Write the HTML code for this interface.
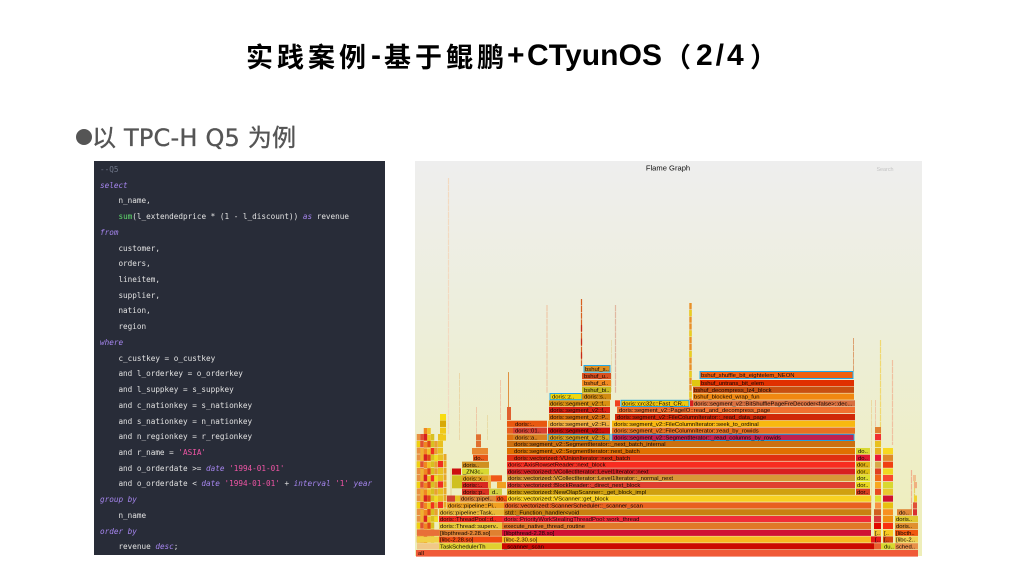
<!DOCTYPE html>
<html><head><meta charset="utf-8"><style>
html,body{margin:0;padding:0;width:1024px;height:576px;overflow:hidden;background:#fff}
svg{position:absolute;left:0;top:0}
.ti{position:absolute;top:35px;font:bold 27px/42px "Noto Sans CJK SC",sans-serif;color:#000;letter-spacing:4px;white-space:nowrap}
.tl{position:absolute;top:35px;font:bold 30px/42px "Liberation Sans",sans-serif;color:#000;white-space:nowrap}
#sub{position:absolute;left:92px;top:120px;font:24px/36px "DejaVu Sans","Noto Sans CJK SC",sans-serif;color:#555;white-space:nowrap;letter-spacing:.2px;-webkit-text-stroke:.35px #555}
#dot{position:absolute;left:76px;top:129px;width:16px;height:16px;border-radius:50%;background:#555}
#code{position:absolute;left:94px;top:161px;width:291px;height:394px;background:#282c38;overflow:hidden}
#code pre{margin:0;position:absolute;left:6px;top:1px;font:7.67px/15.72px "DejaVu Sans Mono",monospace;color:#e2e2e2}
#code i{color:#a585ee;font-style:italic}
#code b{color:#ef55a5;font-weight:normal}
#code u{color:#5fdc6c;text-decoration:none}
#code s{color:#6f7688;text-decoration:none}
svg text{font:5.9px "Liberation Sans",sans-serif;fill:#100804}
</style></head><body>
<span class="ti" style="left:246px">实践案例</span>
<span class="tl" style="left:371px">-</span>
<span class="ti" style="left:384px">基于鲲鹏</span>
<span class="tl" style="left:507px">+</span>
<span class="tl" style="left:527px;letter-spacing:.1px">CTyunOS</span>
<span class="ti" style="left:664px">（</span>
<span class="tl" style="left:696px;letter-spacing:3px">2/4</span>
<span class="ti" style="left:750px">）</span>
<div id="dot"></div>
<div id="sub">以 TPC-H Q5 为例</div>
<div id="code"><pre><s>--Q5</s>
<i>select</i>
    n_name,
    <u>sum</u>(l_extendedprice * (1 - l_discount)) <i>as</i> revenue
<i>from</i>
    customer,
    orders,
    lineitem,
    supplier,
    nation,
    region
<i>where</i>
    c_custkey = o_custkey
    and l_orderkey = o_orderkey
    and l_suppkey = s_suppkey
    and c_nationkey = s_nationkey
    and s_nationkey = n_nationkey
    and n_regionkey = r_regionkey
    and r_name = <b>'ASIA'</b>
    and o_orderdate &gt;= <i>date</i> <b>'1994-01-01'</b>
    and o_orderdate &lt; <i>date</i> <b>'1994-01-01'</b> + <i>interval</i> <b>'1'</b> <i>year</i>
<i>group by</i>
    n_name
<i>order by</i>
    revenue <i>desc</i>;</pre></div>
<svg width="1024" height="576" viewBox="0 0 1024 576">
<defs><linearGradient id="bg" x1="0" y1="0" x2="0" y2="1"><stop offset="0" stop-color="#eeeeee"/><stop offset=".4" stop-color="#edeedb"/><stop offset="1" stop-color="#eeeeb8"/></linearGradient></defs>
<rect x="415" y="161" width="507" height="395" fill="url(#bg)"/>
<text x="668" y="170.5" text-anchor="middle" style="font-size:7.6px;fill:#111">Flame Graph</text>
<text x="885" y="171" text-anchor="middle" style="font-size:5.4px;fill:#c4c4c4">Search</text>
<g fill="none" stroke-dasharray="6.2 .6">
<path d="M448.5 178V434" stroke="#f3d9c0" stroke-width="1.2"/>
<path d="M459.5 373V440" stroke="#ead7a8" stroke-width="1"/>
<path d="M476.5 407V440" stroke="#eec9a8" stroke-width="1"/>
<path d="M487.5 415V440" stroke="#e8dca8" stroke-width="1"/>
<path d="M500.5 380V420" stroke="#f0c8a8" stroke-width="1"/>
<path d="M508.5 372V412" stroke="#d8a050" stroke-width="1"/>
<path d="M547 305V393" stroke="#eec8a8" stroke-width="1.2"/>
<path d="M581.5 299V366" stroke="#d86020" stroke-width="1.2"/>
<path d="M581.5 325V366" stroke="#c82818" stroke-width="1.2" stroke-dasharray="6.2 7.4"/>
<path d="M611.5 340V392" stroke="#e8dcb0" stroke-width="1"/>
<path d="M615.5 305V393" stroke="#e0b8a0" stroke-width="1.2"/>
<path d="M690.5 303V400" stroke="#e89028" stroke-width="2.4"/>
<path d="M690.5 310V400" stroke="#e8d020" stroke-width="2.4" stroke-dasharray="6.2 14.2"/>
<path d="M853.5 338V372" stroke="#dca070" stroke-width="1"/>
<path d="M871.5 400V515" stroke="#ecd8a0" stroke-width="1"/>
<path d="M875.5 400V445" stroke="#f0c8a8" stroke-width="1"/>
<path d="M880.5 340V445" stroke="#f0d870" stroke-width="1.2"/>
<path d="M892.5 360V445" stroke="#f0c0a0" stroke-width="1.2"/>
<path d="M911.5 470V510" stroke="#f0b090" stroke-width="1.2"/>
<path d="M914.5 480V505" stroke="#e8d060" stroke-width="1.2"/>
</g>
<!-- left fine grained -->
<g fill="none" stroke-dasharray="6.2 .6">
<path d="M418.5 434V543" stroke="#e89040" stroke-width="3.5"/>
<path d="M418.5 441V543" stroke="#f0d010" stroke-width="3.5" stroke-dasharray="6.2 14.2"/>
<path d="M422 434V543" stroke="#e05030" stroke-width="3.5"/>
<path d="M422 448V543" stroke="#f0b030" stroke-width="3.5" stroke-dasharray="13 7.4"/>
<path d="M425.5 428V543" stroke="#f08820" stroke-width="3.5"/>
<path d="M425.5 434V543" stroke="#d82020" stroke-width="3.5" stroke-dasharray="6.2 14.2"/>
<path d="M429 428V536" stroke="#f0c020" stroke-width="3.5"/>
<path d="M429 441V543" stroke="#e04818" stroke-width="3.5" stroke-dasharray="6.2 7.4"/>
<path d="M432.5 434V543" stroke="#d8c020" stroke-width="3.5"/>
<path d="M432.5 448V543" stroke="#f03020" stroke-width="3.5" stroke-dasharray="6.2 21"/>
<path d="M436 441V522" stroke="#e8a030" stroke-width="3.5"/>
<path d="M436 455V522" stroke="#f0e020" stroke-width="3.5" stroke-dasharray="6.2 14.2"/>
<path d="M440.5 434V509" stroke="#e8c020" stroke-width="5"/>
<path d="M440.5 461V509" stroke="#f03020" stroke-width="5" stroke-dasharray="6.2 14.2"/>
<path d="M445 454V509" stroke="#e8a828" stroke-width="3"/>
<path d="M443 414V441" stroke="#f0c818" stroke-width="6" stroke-dasharray="6.2 .6"/>
</g>
<g>
<rect x="440" y="414" width="6" height="6.2" fill="#f8dc10"/><rect x="440" y="420.7" width="6" height="6.2" fill="#d8a808"/>
<rect x="450" y="468.5" width="2" height="27" fill="#e8e0a8"/>
<rect x="452" y="468.5" width="9" height="6.2" fill="#cc1010"/><rect x="452" y="475.3" width="10" height="13" fill="#cfc020"/>
<rect x="447" y="495.5" width="8" height="6.2" fill="#d04030"/><rect x="455" y="495.5" width="5" height="6.2" fill="#e8c020"/>
<rect x="460" y="495.5" width="36" height="6.2" fill="#e08838"/><text x="461" y="500.6">doris::pipel..</text>
<rect x="496" y="495.5" width="11" height="6.2" fill="#f05010"/><text x="497" y="500.6">do..</text>
<rect x="447" y="502.4" width="57" height="6.2" fill="#f0a020"/><text x="448" y="507.5">doris::pipeline::Pi..</text>
<rect x="439" y="509.2" width="65" height="6.2" fill="#e8b838"/><text x="440" y="514.3">doris::pipeline::Task..</text>
<rect x="439" y="516" width="65" height="6.2" fill="#f03020"/><text x="440" y="521.1">doris::ThreadPool::d..</text>
<rect x="439" y="522.8" width="65" height="6.2" fill="#e8c838"/><text x="440" y="527.9">doris::Thread::superv..</text>
<rect x="439" y="529.7" width="63" height="6.2" fill="#e08030"/><text x="440" y="534.8">[libpthread-2.28.so]</text>
<rect x="439" y="536.4" width="63" height="6.2" fill="#f04c10"/><text x="440" y="541.5">[libc-2.28.so]</text>
<rect x="439" y="543.2" width="63" height="6.2" fill="#e0d030"/><text x="440" y="548.3">TaskSchedulerTh</text>
<rect x="417" y="543.2" width="22" height="6.2" fill="#f0c888"/>
<rect x="417" y="536.4" width="22" height="6.2" fill="#f0d048"/>
<rect x="417" y="529.7" width="22" height="6.2" fill="#e87038"/>
<rect x="416" y="550" width="502" height="6.6" fill="#f05a38"/><text x="418" y="555.2">all</text>
<rect x="462" y="461.7" width="27" height="6.2" fill="#d09020"/><text x="463" y="466.8">doris..</text>
<rect x="462" y="468.5" width="27" height="6.2" fill="#d8d830"/><text x="463" y="473.6">_ZN3c..</text>
<rect x="462" y="475.3" width="27" height="6.2" fill="#e0a020"/><text x="463" y="480.4">doris::x..</text>
<rect x="462" y="482" width="27" height="6.2" fill="#d82820"/><text x="463" y="487.1">doris::..</text>
<rect x="462" y="488.7" width="27" height="6.2" fill="#d83020"/><text x="463" y="493.8">doris::p..</text>
<rect x="489" y="488.7" width="13" height="6.2" fill="#d0d040"/><text x="492" y="493.8">d..</text>
<rect x="488" y="475.3" width="3" height="13" fill="#f0b040"/>
<rect x="473" y="454.7" width="15" height="6.2" fill="#e85818"/><text x="474" y="459.8">do..</text>
<rect x="472" y="448" width="16" height="6.2" fill="#e88830"/>
<rect x="476" y="441" width="5" height="6.2" fill="#e07030"/><rect x="476" y="434.3" width="5" height="6.2" fill="#e07030"/>
<rect x="491" y="475.3" width="11" height="6.2" fill="#f05818"/>
<rect x="497" y="482" width="9" height="6.2" fill="#f0a020"/>
<rect x="507" y="407" width="4" height="13" fill="#e06030"/><rect x="508" y="373" width="1" height="34" fill="#e09040"/>
</g>
<!-- main rows -->
<g>
<rect x="502" y="543.2" width="372" height="6.2" fill="#cc0a00"/><text x="504" y="548.3">_scanner_scan</text>
<rect x="502" y="536.4" width="369" height="6.2" fill="#f8b820"/><text x="504" y="541.5">[libc-2.30.so]</text>
<rect x="502" y="529.7" width="369" height="6.2" fill="#d01034"/><text x="504" y="534.8">[libpthread-2.28.so]</text>
<rect x="502" y="522.8" width="369" height="6.2" fill="#e07828"/><text x="504" y="527.9">execute_native_thread_routine</text>
<rect x="502" y="516" width="369" height="6.2" fill="#f02c38"/><text x="504" y="521.1">doris::PriorityWorkStealingThreadPool::work_thread</text>
<rect x="504" y="509.2" width="367" height="6.2" fill="#c88010"/><text x="505" y="514.3">std::_Function_handler&lt;void</text>
<rect x="504" y="502.4" width="367" height="6.2" fill="#e86020"/><text x="505" y="507.5">doris::vectorized::ScannerScheduler::_scanner_scan</text>
<rect x="507" y="495.5" width="364" height="6.2" fill="#f8d020"/><text x="508" y="500.6">doris::vectorized::VScanner::get_block</text>
<rect x="507" y="488.7" width="348" height="6.2" fill="#d0a010"/><text x="508" y="493.8">doris::vectorized::NewOlapScanner::_get_block_impl</text>
<rect x="507" y="482" width="348" height="6.2" fill="#e04030"/><text x="508" y="487.1">doris::vectorized::BlockReader::_direct_next_block</text>
<rect x="507" y="475" width="348" height="6.2" fill="#d89838"/><text x="508" y="480.1">doris::vectorized::VCollectIterator::Level1Iterator::_normal_next</text>
<rect x="507" y="468.4" width="348" height="6.2" fill="#d82020"/><text x="508" y="473.5">doris::vectorized::VCollectIterator::Level1Iterator::next</text>
<rect x="507" y="461.6" width="348" height="6.2" fill="#f82c20"/><text x="508" y="466.7">doris::AxisRowsetReader::next_block</text>
<rect x="507" y="454.7" width="348" height="6.2" fill="#e03010"/><text x="514" y="459.8">doris::vectorized::VUnionIterator::next_batch</text>
<rect x="507" y="448" width="348" height="6.2" fill="#e07000"/><text x="514" y="453.1">doris::segment_v2::SegmentIterator::next_batch</text>
<rect x="507" y="441" width="348" height="6.2" fill="#cc7010"/><text x="514" y="446.1">doris::segment_v2::SegmentIterator::_next_batch_internal</text>
<rect x="507" y="434.3" width="6" height="6.2" fill="#e07010"/>
<rect x="513" y="434.3" width="34" height="6.2" fill="#d88020"/><text x="515" y="439.4">doris::a..</text>
<rect x="513" y="427.5" width="34" height="6.2" fill="#d84030"/><text x="515" y="432.6">doris::01..</text>
<rect x="507" y="427.5" width="6" height="6.2" fill="#e86020"/>
<rect x="507" y="420.7" width="40" height="6.2" fill="#e85810"/><text x="515" y="425.8">doris::..</text>
<rect x="548" y="434.3" width="62" height="6.2" fill="#d8a020" stroke="#22a0e0" stroke-width="1"/><text x="550" y="439.4">doris::segment_v2::S..</text>
<rect x="612" y="434.3" width="242" height="6.2" fill="#c02050" stroke="#22a0e0" stroke-width="1"/><text x="614" y="439.4">doris::segment_v2::SegmentIterator::_read_columns_by_rowids</text>
<rect x="548" y="427.5" width="62" height="6.2" fill="#c81008"/><text x="550" y="432.6">doris::segment_v2::..</text>
<rect x="612" y="427.5" width="243" height="6.2" fill="#e87020"/><text x="614" y="432.6">doris::segment_v2::FileColumnIterator::read_by_rowids</text>
<rect x="548" y="420.7" width="62" height="6.2" fill="#f0b040"/><text x="550" y="425.8">doris::segment_v2::Fi..</text>
<rect x="612" y="420.7" width="243" height="6.2" fill="#f8b810"/><text x="614" y="425.8">doris::segment_v2::FileColumnIterator::seek_to_ordinal</text>
<rect x="549" y="414" width="61" height="6.2" fill="#d87010"/><text x="550" y="419.1">doris::segment_v2::P..</text>
<rect x="615" y="414" width="240" height="6.2" fill="#d02808"/><text x="617" y="419.1">doris::segment_v2::FileColumnIterator::_read_data_page</text>
<rect x="549" y="407" width="61" height="6.2" fill="#d82010"/><text x="550" y="412.1">doris::segment_v2::f..</text>
<rect x="617" y="407" width="238" height="6.2" fill="#f07030"/><text x="619" y="412.1">doris::segment_v2::PageIO::read_and_decompress_page</text>
<rect x="549" y="400.3" width="61" height="6.2" fill="#d89010"/><text x="550" y="405.4">doris::segment_v2::f..</text>
<rect x="615" y="400.3" width="5" height="6.2" fill="#f04020"/>
<rect x="621" y="400.3" width="68" height="6.2" fill="#f0c810" stroke="#22a8e8" stroke-width="1"/><text x="622" y="405.4">doris::crc32c::Fast_CR..</text>
<rect x="690" y="400.3" width="3" height="6.2" fill="#d82020"/>
<rect x="693" y="400.3" width="162" height="6.2" fill="#d87040"/><text x="694" y="405.4">doris::segment_v2::BitShufflePageFreDecoder&lt;false&gt;::dec...</text>
<rect x="550" y="393.5" width="32" height="6.2" fill="#f0d810" stroke="#22a8e8" stroke-width="1"/><text x="552" y="398.6">doris::z..</text>
<rect x="582" y="393.5" width="29" height="6.2" fill="#d08a10"/><text x="584" y="398.6">doris::s..</text>
<rect x="693" y="393.5" width="161" height="6.2" fill="#f08810"/><text x="694" y="398.6">bshuf_blocked_wrap_fun</text>
<rect x="582" y="386.7" width="29" height="6.2" fill="#c8b820"/><text x="584" y="391.8">bshuf_bi..</text>
<rect x="693" y="386.7" width="161" height="6.2" fill="#c85010"/><text x="694" y="391.8">bshuf_decompress_lz4_block</text>
<rect x="582" y="380" width="29" height="6.2" fill="#f08820"/><text x="584" y="385.1">bshuf_d..</text>
<rect x="692" y="380" width="8" height="6.2" fill="#e0c810"/>
<rect x="700" y="380" width="154" height="6.2" fill="#e03000"/><text x="701" y="385.1">bshuf_untrans_bit_elem</text>
<rect x="582" y="373" width="29" height="6.2" fill="#d85020"/><text x="584" y="378.1">bshuf_u..</text>
<rect x="700" y="371.5" width="153" height="7" fill="#f06010" stroke="#22a8e8" stroke-width="1"/><text x="701" y="377">bshuf_shuffle_bit_eightelem_NEON</text>
<rect x="584" y="365.5" width="26" height="6.6" fill="#e09020" stroke="#22a8e8" stroke-width="1"/><text x="585" y="371">bshuf_s..</text>
</g>
<!-- right side -->
<g>
<rect x="856" y="448" width="14" height="6.2" fill="#d8d830"/><text x="858" y="453.1">do..</text>
<rect x="856" y="454.7" width="14" height="6.2" fill="#e01830"/><text x="858" y="459.8">do..</text>
<rect x="856" y="461.6" width="14" height="6.2" fill="#e0b010"/><text x="857" y="466.7">dor..</text>
<rect x="856" y="468.4" width="14" height="6.2" fill="#e0c010"/><text x="857" y="473.5">dor..</text>
<rect x="856" y="475" width="14" height="6.2" fill="#e0e030"/><text x="857" y="480.1">dor..</text>
<rect x="856" y="482" width="14" height="6.2" fill="#e8d820"/><text x="857" y="487.1">dor..</text>
<rect x="856" y="488.7" width="14" height="6.2" fill="#d84020"/><text x="857" y="493.8">dor..</text>
<g>
<rect x="875" y="427" width="6" height="6.2" fill="#e08030"/><rect x="875" y="434" width="6" height="6.2" fill="#f03030"/><rect x="875" y="441" width="6" height="6.2" fill="#e8c020"/>
<rect x="875" y="448" width="6" height="6.2" fill="#e8b020"/><rect x="875" y="454.7" width="6" height="6.2" fill="#e81838"/><rect x="875" y="461.6" width="6" height="6.2" fill="#d8a848"/><rect x="875" y="468.4" width="6" height="6.2" fill="#e04020"/><rect x="875" y="475" width="6" height="6.2" fill="#f06818"/><rect x="875" y="482" width="6" height="6.2" fill="#f8a820"/><rect x="875" y="488.7" width="6" height="6.2" fill="#e84820"/><rect x="875" y="495.5" width="6" height="6.2" fill="#e0e030"/><rect x="875" y="502.4" width="6" height="6.2" fill="#f89040"/><rect x="874" y="509.2" width="7" height="6.2" fill="#d06020"/><rect x="874" y="516" width="7" height="6.2" fill="#d83838"/><rect x="874" y="522.8" width="7" height="6.2" fill="#e00a00"/><rect x="874" y="529.7" width="7" height="6.2" fill="#f0c030"/><text x="875" y="534.8">[..</text><rect x="871" y="536.4" width="10" height="6.2" fill="#e81818"/><text x="875" y="541.5">[..</text><rect x="874" y="543.2" width="7" height="6.2" fill="#e86030"/>
<rect x="883" y="448" width="10" height="6.2" fill="#f8d820"/><rect x="883" y="454.7" width="10" height="6.2" fill="#e08828"/><rect x="883" y="461.6" width="10" height="6.2" fill="#f04010"/><rect x="883" y="468.4" width="10" height="6.2" fill="#f0d820"/><rect x="883" y="475" width="10" height="6.2" fill="#f84830"/><rect x="883" y="482" width="10" height="6.2" fill="#d8d830"/><rect x="883" y="488.7" width="10" height="6.2" fill="#e8c830"/><rect x="883" y="495.5" width="10" height="6.2" fill="#d01030"/><rect x="883" y="502.4" width="10" height="6.2" fill="#e8c010"/><rect x="883" y="509.2" width="10" height="6.2" fill="#f89020"/><rect x="883" y="516" width="10" height="6.2" fill="#f09010"/><rect x="883" y="522.8" width="10" height="6.2" fill="#f83010"/><rect x="883" y="529.7" width="10" height="6.2" fill="#f8c820"/><text x="884" y="534.8">[..</text><rect x="883" y="536.4" width="10" height="6.2" fill="#d84810"/><text x="884" y="541.5">[..</text><rect x="881" y="543.2" width="14" height="6.2" fill="#d8d830"/><text x="884" y="548.3">du..</text>
<rect x="895" y="536.4" width="23" height="6.2" fill="#f0d050"/><text x="896" y="541.5">[libc-2..</text>
<rect x="895" y="543.2" width="23" height="6.2" fill="#e89048"/><text x="896" y="548.3">sched..</text>
<rect x="895" y="529.7" width="23" height="6.2" fill="#f05810"/><text x="896" y="534.8">[libcth..</text>
<rect x="895" y="522.8" width="23" height="6.2" fill="#e09030"/><text x="896" y="527.9">doris..</text>
<rect x="895" y="516" width="23" height="6.2" fill="#e0c830"/><text x="896" y="521.1">doris..</text>
<rect x="897" y="509.2" width="15" height="6.2" fill="#e08838"/><text x="899" y="514.3">do..</text>
<rect x="913" y="502.4" width="4" height="6.2" fill="#e05038"/><rect x="913" y="509.2" width="4" height="6.2" fill="#d83030"/>
<rect x="914" y="495.5" width="3" height="6.2" fill="#f0d030"/>
<rect x="913" y="475" width="3" height="6.2" fill="#f0c090"/><rect x="914" y="482" width="3" height="6.2" fill="#f0b080"/>
</g>
</g>
</svg>
</body></html>
